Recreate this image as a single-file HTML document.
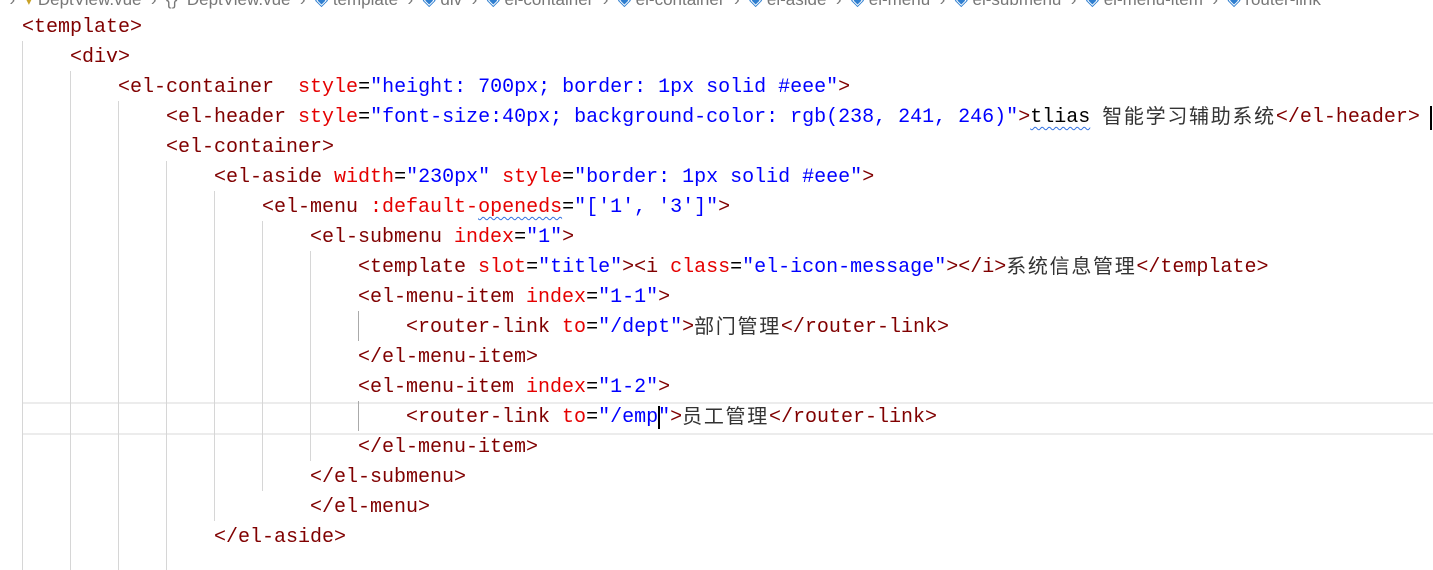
<!DOCTYPE html>
<html><head><meta charset="utf-8"><style>
body{margin:0;width:1433px;height:570px;background:#fff;overflow:hidden;position:relative;font-family:"Liberation Mono","Noto Sans CJK SC",monospace;}
.l{position:absolute;left:0;height:30px;line-height:30px;font-size:20px;white-space:pre;color:#000;overflow:visible;margin-top:2px}
.t{color:#800000}.a{color:#e50000}.v{color:#0000ff}
.c{font-family:"Noto Sans CJK SC",sans-serif;font-size:20px;letter-spacing:1.7px;color:#333;display:inline-block;height:30px;line-height:30px;vertical-align:top;position:relative;top:-3px}
.g{position:absolute;width:1px;background:#d6d6d6}
.w{text-decoration:underline wavy #3070e0;text-decoration-thickness:1px;text-underline-offset:4px}
.bc{position:absolute;top:-10px;left:0;font-family:"Liberation Sans","Noto Sans CJK SC",sans-serif;font-size:17px;color:#777;white-space:pre}
.ic{color:#2f7fd0}
</style></head><body>
<div class="bc">  ›  <span style="color:#c9a227">▾</span> DeptView.vue  ›  {}  DeptView.vue  ›  <span class="ic">◈</span> template  ›  <span class="ic">◈</span> div  ›  <span class="ic">◈</span> el-container  ›  <span class="ic">◈</span> el-container  ›  <span class="ic">◈</span> el-aside  ›  <span class="ic">◈</span> el-menu  ›  <span class="ic">◈</span> el-submenu  ›  <span class="ic">◈</span> el-menu-item  ›  <span class="ic">◈</span> router-link</div>
<div style="position:absolute;left:22px;right:0;top:402px;height:29px;border-top:2px solid #ececec;border-bottom:2px solid #ececec"></div>
<div class="g" style="left:22px;top:41px;height:529px"></div>
<div class="g" style="left:70px;top:71px;height:499px"></div>
<div class="g" style="left:118px;top:101px;height:469px"></div>
<div class="g" style="left:166px;top:161px;height:409px"></div>
<div class="g" style="left:214px;top:191px;height:330px"></div>
<div class="g" style="left:262px;top:221px;height:270px"></div>
<div class="g" style="left:310px;top:251px;height:210px"></div>
<div class="g" style="left:358px;top:311px;height:30px;background:#aaa"></div>
<div class="g" style="left:358px;top:401px;height:30px;background:#aaa"></div>
<div class="l" style="top:11px;left:22px"><span class="t">&lt;template&gt;</span></div>
<div class="l" style="top:41px;left:70px"><span class="t">&lt;div&gt;</span></div>
<div class="l" style="top:71px;left:118px"><span class="t">&lt;el-container</span>  <span class="a">style</span>=<span class="v">"height: 700px; border: 1px solid #eee"</span><span class="t">&gt;</span></div>
<div class="l" style="top:101px;left:166px"><span class="t">&lt;el-header</span> <span class="a">style</span>=<span class="v">"font-size:40px; background-color: rgb(238, 241, 246)"</span><span class="t">&gt;</span><span class="w">tlias</span> <span class="c">智能学习辅助系统</span><span class="t">&lt;/el-header&gt;</span></div>
<div class="l" style="top:131px;left:166px"><span class="t">&lt;el-container&gt;</span></div>
<div class="l" style="top:161px;left:214px"><span class="t">&lt;el-aside</span> <span class="a">width</span>=<span class="v">"230px"</span> <span class="a">style</span>=<span class="v">"border: 1px solid #eee"</span><span class="t">&gt;</span></div>
<div class="l" style="top:191px;left:262px"><span class="t">&lt;el-menu</span> <span class="a">:default-<span class="w">openeds</span></span>=<span class="v">"['1', '3']"</span><span class="t">&gt;</span></div>
<div class="l" style="top:221px;left:310px"><span class="t">&lt;el-submenu</span> <span class="a">index</span>=<span class="v">"1"</span><span class="t">&gt;</span></div>
<div class="l" style="top:251px;left:358px"><span class="t">&lt;template</span> <span class="a">slot</span>=<span class="v">"title"</span><span class="t">&gt;&lt;i</span> <span class="a">class</span>=<span class="v">"el-icon-message"</span><span class="t">&gt;&lt;/i&gt;</span><span class="c">系统信息管理</span><span class="t">&lt;/template&gt;</span></div>
<div class="l" style="top:281px;left:358px"><span class="t">&lt;el-menu-item</span> <span class="a">index</span>=<span class="v">"1-1"</span><span class="t">&gt;</span></div>
<div class="l" style="top:311px;left:406px"><span class="t">&lt;router-link</span> <span class="a">to</span>=<span class="v">"/dept"</span><span class="t">&gt;</span><span class="c">部门管理</span><span class="t">&lt;/router-link&gt;</span></div>
<div class="l" style="top:341px;left:358px"><span class="t">&lt;/el-menu-item&gt;</span></div>
<div class="l" style="top:371px;left:358px"><span class="t">&lt;el-menu-item</span> <span class="a">index</span>=<span class="v">"1-2"</span><span class="t">&gt;</span></div>
<div class="l" style="top:401px;left:406px"><span class="t">&lt;router-link</span> <span class="a">to</span>=<span class="v">"/emp<span style="border-right:2px solid #000;margin-right:-2px"></span>"</span><span class="t">&gt;</span><span class="c">员工管理</span><span class="t">&lt;/router-link&gt;</span></div>
<div class="l" style="top:431px;left:358px"><span class="t">&lt;/el-menu-item&gt;</span></div>
<div class="l" style="top:461px;left:310px"><span class="t">&lt;/el-submenu&gt;</span></div>
<div class="l" style="top:491px;left:310px"><span class="t">&lt;/el-menu&gt;</span></div>
<div class="l" style="top:521px;left:214px"><span class="t">&lt;/el-aside&gt;</span></div>
<div style="position:absolute;left:1430px;top:106px;width:2px;height:24px;background:#000"></div>
</body></html>
